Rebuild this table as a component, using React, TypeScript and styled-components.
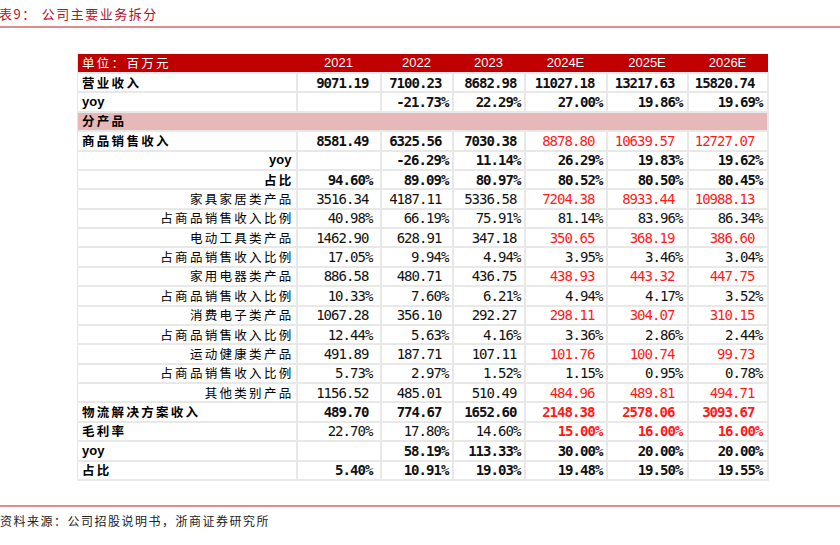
import styled, { createGlobalStyle } from "styled-components";

const GlobalStyle = createGlobalStyle`
  html, body {
    margin: 0;
    padding: 0;
    background: #ffffff;
  }
  body {
    font-family: "Liberation Sans", "Noto Sans CJK SC", sans-serif;
    color: #000;
  }
`;

// column widths after the label column, with right padding for plain numbers and for percentages
const cols = [
  { w: 84, num: 11, pct: 7 },
  { w: 72, num: 10, pct: 3 },
  { w: 72, num: 7, pct: 3 },
  { w: 82, num: 11, pct: 3 },
  { w: 81, num: 12, pct: 4 },
  { w: 80, num: 12, pct: 4 },
];

const years = ["2021", "2022", "2023", "2024E", "2025E", "2026E"];

type Kind = "main" | "sub" | "item";

type Row = {
  label: string;
  kind: Kind;
  latin?: boolean;
  values: string[]; // "r:" prefix marks a red (forecast) value
  softHist?: boolean;
  redBold?: boolean;
};

const rows: (Row | "section")[] = [
  { label: "营业收入", kind: "main", values: ["9071.19", "7100.23", "8682.98", "11027.18", "13217.63", "15820.74"] },
  { label: "yoy", kind: "main", latin: true, values: ["", "-21.73%", "22.29%", "27.00%", "19.86%", "19.69%"] },
  "section",
  { label: "商品销售收入", kind: "main", values: ["8581.49", "6325.56", "7030.38", "r:8878.80", "r:10639.57", "r:12727.07"] },
  { label: "yoy", kind: "sub", latin: true, values: ["", "-26.29%", "11.14%", "26.29%", "19.83%", "19.62%"] },
  { label: "占比", kind: "sub", values: ["94.60%", "89.09%", "80.97%", "80.52%", "80.50%", "80.45%"] },
  { label: "家具家居类产品", kind: "item", values: ["3516.34", "4187.11", "5336.58", "r:7204.38", "r:8933.44", "r:10988.13"] },
  { label: "占商品销售收入比例", kind: "item", values: ["40.98%", "66.19%", "75.91%", "81.14%", "83.96%", "86.34%"] },
  { label: "电动工具类产品", kind: "item", values: ["1462.90", "628.91", "347.18", "r:350.65", "r:368.19", "r:386.60"] },
  { label: "占商品销售收入比例", kind: "item", values: ["17.05%", "9.94%", "4.94%", "3.95%", "3.46%", "3.04%"] },
  { label: "家用电器类产品", kind: "item", values: ["886.58", "480.71", "436.75", "r:438.93", "r:443.32", "r:447.75"] },
  { label: "占商品销售收入比例", kind: "item", values: ["10.33%", "7.60%", "6.21%", "4.94%", "4.17%", "3.52%"] },
  { label: "消费电子类产品", kind: "item", values: ["1067.28", "356.10", "292.27", "r:298.11", "r:304.07", "r:310.15"] },
  { label: "占商品销售收入比例", kind: "item", values: ["12.44%", "5.63%", "4.16%", "3.36%", "2.86%", "2.44%"] },
  { label: "运动健康类产品", kind: "item", values: ["491.89", "187.71", "107.11", "r:101.76", "r:100.74", "r:99.73"] },
  { label: "占商品销售收入比例", kind: "item", values: ["5.73%", "2.97%", "1.52%", "1.15%", "0.95%", "0.78%"] },
  { label: "其他类别产品", kind: "item", values: ["1156.52", "485.01", "510.49", "r:484.96", "r:489.81", "r:494.71"] },
  { label: "物流解决方案收入", kind: "main", redBold: true, values: ["489.70", "774.67", "1652.60", "r:2148.38", "r:2578.06", "r:3093.67"] },
  { label: "毛利率", kind: "main", softHist: true, redBold: true, values: ["22.70%", "17.80%", "14.60%", "r:15.00%", "r:16.00%", "r:16.00%"] },
  { label: "yoy", kind: "main", latin: true, values: ["", "58.19%", "113.33%", "30.00%", "20.00%", "20.00%"] },
  { label: "占比", kind: "main", values: ["5.40%", "10.91%", "19.03%", "19.48%", "19.50%", "19.55%"] },
];

export default function App() {
  return (
    <Page>
      <GlobalStyle />
      <Title>
        <TitleNo>表9：</TitleNo>
        <TitleText>公司主要业务拆分</TitleText>
      </Title>

      <TableWrap>
        <Table>
          <colgroup>
            <col style={{ width: 219 }} />
            {cols.map((c, i) => (
              <col key={i} style={{ width: c.w }} />
            ))}
          </colgroup>
          <thead>
            <HeadRow>
              <HeadLabel>单位：百万元</HeadLabel>
              {years.map((y) => (
                <HeadYear key={y}>{y}</HeadYear>
              ))}
            </HeadRow>
          </thead>
          <tbody>
            {rows.map((r, i) => {
              if (r === "section") {
                return (
                  <BodyRow key={i}>
                    <SectionCell colSpan={7}>分产品</SectionCell>
                  </BodyRow>
                );
              }
              const bold = r.kind !== "item";
              return (
                <BodyRow key={i}>
                  <Label $kind={r.kind} $latin={!!r.latin}>
                    {r.label}
                  </Label>
                  {r.values.map((v, j) => {
                    const red = v.startsWith("r:");
                    const text = red ? v.slice(2) : v;
                    const pct = text.endsWith("%");
                    let weight = bold;
                    if (red) weight = !!r.redBold;
                    else if (r.softHist) weight = false;
                    return (
                      <Num
                        key={j}
                        $red={red}
                        $bold={weight}
                        $pad={pct ? cols[j].pct : cols[j].num}
                      >
                        {text}
                      </Num>
                    );
                  })}
                </BodyRow>
              );
            })}
          </tbody>
        </Table>
      </TableWrap>

      <Footer>资料来源：公司招股说明书，浙商证券研究所</Footer>
    </Page>
  );
}

const Page = styled.div`
  width: 840px;
  height: 545px;
  overflow: hidden;
  background: #fff;
`;

const Title = styled.div`
  height: 26px;
  display: flex;
  align-items: center;
  border-bottom: 2px solid #e08c8c;
  color: #b8102a;
  font-family: "Noto Sans CJK SC", sans-serif;
  font-size: 13px;
  letter-spacing: 1.5px;
`;

const TitleNo = styled.span`
  margin-left: -1px;
`;

const TitleText = styled.span`
  margin-left: 5px;
`;

const TableWrap = styled.div`
  padding: 26px 0 0 77px;
`;

const Table = styled.table`
  border-collapse: collapse;
  table-layout: fixed;
  width: 690px;
  border-left: 1px solid #e4e4e4;
`;

const HeadRow = styled.tr`
  height: 18px;
  background: #c00000;
`;

const HeadLabel = styled.th`
  padding: 0 0 0 4px;
  text-align: left;
  color: #fff;
  font-family: "Noto Sans CJK SC", sans-serif;
  font-weight: 400;
  font-size: 12.5px;
  letter-spacing: 2.3px;
  line-height: 18px;
  border: 0;
`;

const HeadYear = styled.th`
  padding: 0;
  text-align: center;
  color: #fff;
  font-family: "Liberation Sans", sans-serif;
  font-weight: 400;
  font-size: 13px;
  line-height: 18px;
  border: 0;
`;

const BodyRow = styled.tr`
  height: 19.38px;
`;

const SectionCell = styled.td`
  background: #e6b8b7;
  padding: 0 0 0 4px;
  font-family: "Noto Sans CJK SC", sans-serif;
  font-weight: 700;
  font-size: 12.5px;
  letter-spacing: 2.3px;
  line-height: 16px;
  border: 2px solid #e8e8e8;
  border-left: 0;
`;

const Label = styled.td<{ $kind: Kind; $latin: boolean }>`
  padding: 0 ${(p) => (p.$kind === "main" ? 0 : 2)}px 0 4px;
  text-align: ${(p) => (p.$kind === "main" ? "left" : "right")};
  font-family: ${(p) =>
    p.$latin ? `"Liberation Sans", sans-serif` : `"Noto Sans CJK SC", sans-serif`};
  font-weight: ${(p) => (p.$kind === "item" ? 400 : 700)};
  font-size: ${(p) => (p.$latin ? 13 : 12.5)}px;
  letter-spacing: ${(p) => (p.$latin ? 0 : 2.3)}px;
  line-height: 16px;
  white-space: nowrap;
  border: 2px solid #e8e8e8;
  border-left: 0;
  padding-right: ${(p) => (p.$latin ? 4 : p.$kind === "main" ? 0 : 2)}px;
`;

const Num = styled.td<{ $red: boolean; $bold: boolean; $pad: number }>`
  padding: 0 ${(p) => p.$pad}px 0 0;
  text-align: right;
  font-family: "DejaVu Sans Mono", monospace;
  font-size: 14px;
  letter-spacing: -0.95px;
  line-height: 16px;
  font-weight: ${(p) => (p.$bold ? 700 : 400)};
  color: ${(p) => (p.$red ? "#ff1a1a" : "#111")};
  white-space: nowrap;
  border: 2px solid #e8e8e8;
`;

const Footer = styled.div`
  margin-top: 24px;
  border-top: 2px solid #e08c8c;
  height: 28px;
  display: flex;
  align-items: center;
  font-family: "Noto Sans CJK SC", sans-serif;
  font-size: 12px;
  letter-spacing: 1.5px;
  color: #222;
`;
